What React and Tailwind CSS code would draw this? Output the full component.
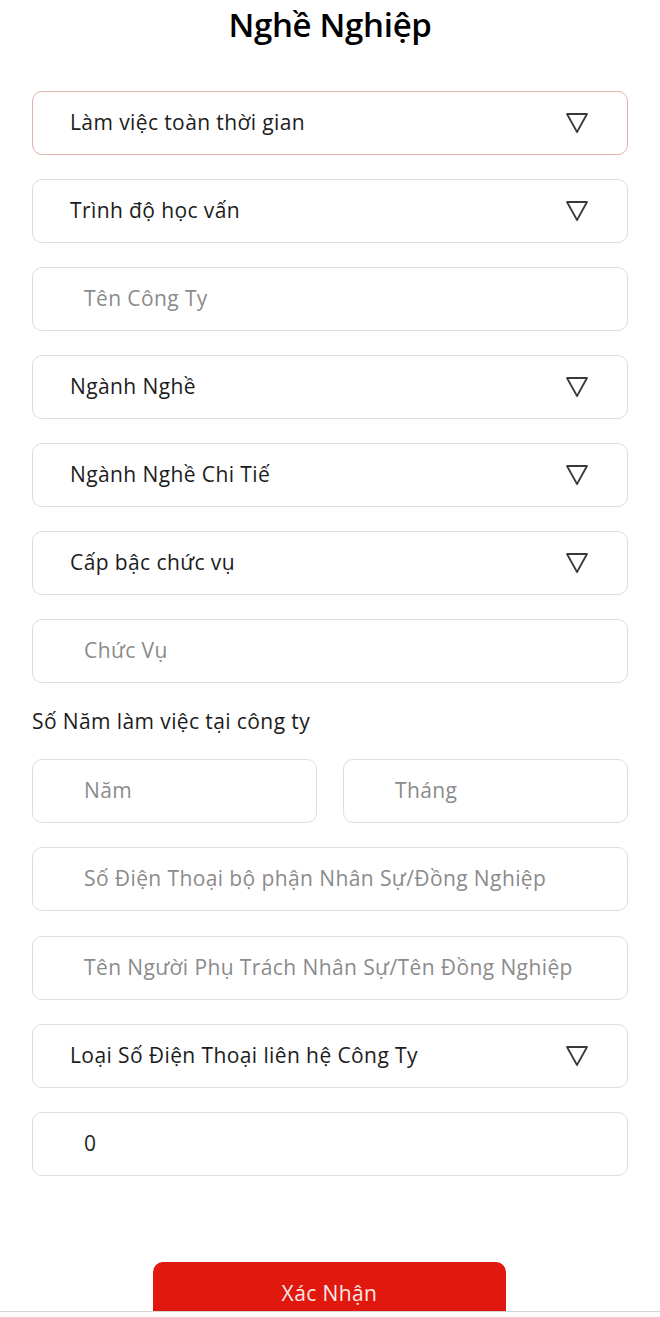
import React from "react";

const font = { fontFamily: "'Open Sans', 'Noto Sans', 'Liberation Sans', sans-serif" };

function Caret() {
  return (
    <svg width="24" height="22" viewBox="0 0 24 22" className="shrink-0">
      <polygon
        points="2,2 22,2 12,20"
        fill="none"
        stroke="#3a3a3a"
        strokeWidth="1.8"
        strokeLinejoin="round"
      />
    </svg>
  );
}

function SelectField({ label, active }) {
  return (
    <div
      className={`flex h-16 items-center justify-between rounded-[10px] border bg-white pl-[37px] pr-[38px] ${
        active ? "border-[#e2b3ad]" : "border-[#dedede]"
      }`}
    >
      <span className="text-[21px] tracking-[0.4px] text-[#1c1c1c]">{label}</span>
      <Caret />
    </div>
  );
}

function InputField({ placeholder, value, className = "" }) {
  return (
    <div
      className={`flex h-16 items-center rounded-[10px] border border-[#dedede] bg-white pl-[51px] ${className}`}
    >
      {value ? (
        <span className="text-[21px] tracking-[0.4px] text-[#1c1c1c]">{value}</span>
      ) : (
        <span className="text-[21px] tracking-[0.4px] text-[#8b8b8b]">{placeholder}</span>
      )}
    </div>
  );
}

export default function App() {
  return (
    <div className="relative h-[1317px] w-[660px] overflow-hidden bg-white" style={font}>
      <h1 className="pt-[3px] text-center text-[33px] font-semibold leading-[44px] tracking-[-0.3px] text-black">
        Nghề Nghiệp
      </h1>

      <div className="mt-[44px] flex flex-col gap-6 px-8">
        <SelectField label="Làm việc toàn thời gian" active />
        <SelectField label="Trình độ học vấn" />
        <InputField placeholder="Tên Công Ty" />
        <SelectField label="Ngành Nghề" />
        <SelectField label="Ngành Nghề Chi Tiế" />
        <SelectField label="Cấp bậc chức vụ" />
        <InputField placeholder="Chức Vụ" />
        <div className="h-[28px] text-[21px] leading-[28px] tracking-[0.4px] text-[#1c1c1c]">
          Số Năm làm việc tại công ty
        </div>
        <div className="flex gap-[26px]">
          <InputField placeholder="Năm" className="flex-1" />
          <InputField placeholder="Tháng" className="flex-1" />
        </div>
        <InputField placeholder="Số Điện Thoại bộ phận Nhân Sự/Đồng Nghiệp" />
        <InputField placeholder="Tên Người Phụ Trách Nhân Sự/Tên Đồng Nghiệp" className="mt-px" />
        <SelectField label="Loại Số Điện Thoại liên hệ Công Ty" />
        <InputField value="0" />
      </div>

      <div className="mt-[86px] flex justify-center">
        <button className="ml-[-1px] h-16 w-[353px] rounded-[10px] bg-[#e0180d] text-[21px] tracking-[0.4px] text-[#fde9e6]">
          Xác Nhận
        </button>
      </div>

      {/* bottom bar edge */}
      <div className="absolute bottom-0 left-0 right-0 h-[6px] border-t border-[#d4d4d4] bg-[#fafafa]" />
    </div>
  );
}
